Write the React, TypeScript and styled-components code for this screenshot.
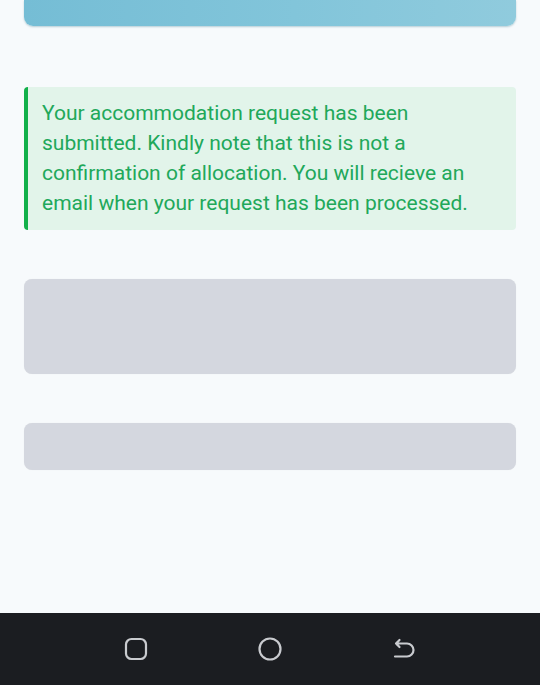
import styled, { createGlobalStyle } from 'styled-components';

const GlobalStyle = createGlobalStyle`
  html, body {
    margin: 0;
    padding: 0;
    background: #f7fafc;
    font-family: Roboto, 'Liberation Sans', sans-serif;
  }
`;

export default function App() {
  return (
    <Screen>
      <GlobalStyle />
      <Main>
        <Banner />
        <Alert>
          Your accommodation request has been submitted. Kindly note that this is not a
          confirmation of allocation. You will recieve an email when your request has been
          processed.
        </Alert>
        <Skeleton height={95} />
        <Skeleton height={47} />
      </Main>

      <NavBar>
        <NavButton aria-label='Recent apps'>
          <svg width='24' height='24' viewBox='0 0 24 24' fill='none'>
            <rect x='2' y='2' width='20' height='20' rx='5.5' stroke='#c9cbcf' strokeWidth='2.2' />
          </svg>
        </NavButton>
        <NavButton aria-label='Home'>
          <svg width='26' height='26' viewBox='0 0 26 26' fill='none'>
            <circle cx='13' cy='13' r='10.5' stroke='#c9cbcf' strokeWidth='2.2' />
          </svg>
        </NavButton>
        <NavButton aria-label='Back'>
          <svg width='24' height='24' viewBox='0 0 24 24' fill='none'>
            <path
              d='M7.5 3 L4 6.5 L7.5 10 M4 6.5 H15 A6.5 6.5 0 0 1 15 19.5 H3'
              stroke='#c9cbcf'
              strokeWidth='2.2'
              strokeLinecap='round'
              strokeLinejoin='round'
            />
          </svg>
        </NavButton>
      </NavBar>
    </Screen>
  );
}

const Screen = styled('div')`
  width: 540px;
  height: 685px;
  display: flex;
  flex-direction: column;
  background: #f7fafc;
  overflow: hidden;
`;

const Main = styled('main')`
  flex: 1;
  display: flex;
  flex-direction: column;
  gap: 49px;
  padding: 0 24px;
`;

const Banner = styled('div')`
  height: 26px;
  margin-bottom: 12px;
  border-radius: 0 0 9px 9px;
  background: linear-gradient(90deg, #75bdd5 0%, #82c5da 55%, #90cbdd 100%);
  box-shadow: 0 1px 2px rgba(60, 120, 140, 0.35);
`;

const Alert = styled('div')`
  padding: 11px 44px 12px 14px;
  border-left: 4px solid #12b04a;
  border-radius: 4px;
  background: #e2f4ea;
  color: #21a85a;
  font-size: 21px;
  line-height: 30px;
`;

const Skeleton = styled('div')<{ height: number }>`
  height: ${(p) => p.height}px;
  border-radius: 8px;
  background: #d4d7df;
  box-shadow: 0 0 1px rgba(0, 0, 0, 0.08);
`;

const NavBar = styled('nav')`
  height: 72px;
  flex-shrink: 0;
  display: flex;
  justify-content: center;
  align-items: center;
  gap: 108px;
  background: #1b1d21;
`;

const NavButton = styled('button')`
  width: 26px;
  height: 72px;
  display: flex;
  justify-content: center;
  align-items: center;
  padding: 0;
  border: none;
  background: none;
`;
